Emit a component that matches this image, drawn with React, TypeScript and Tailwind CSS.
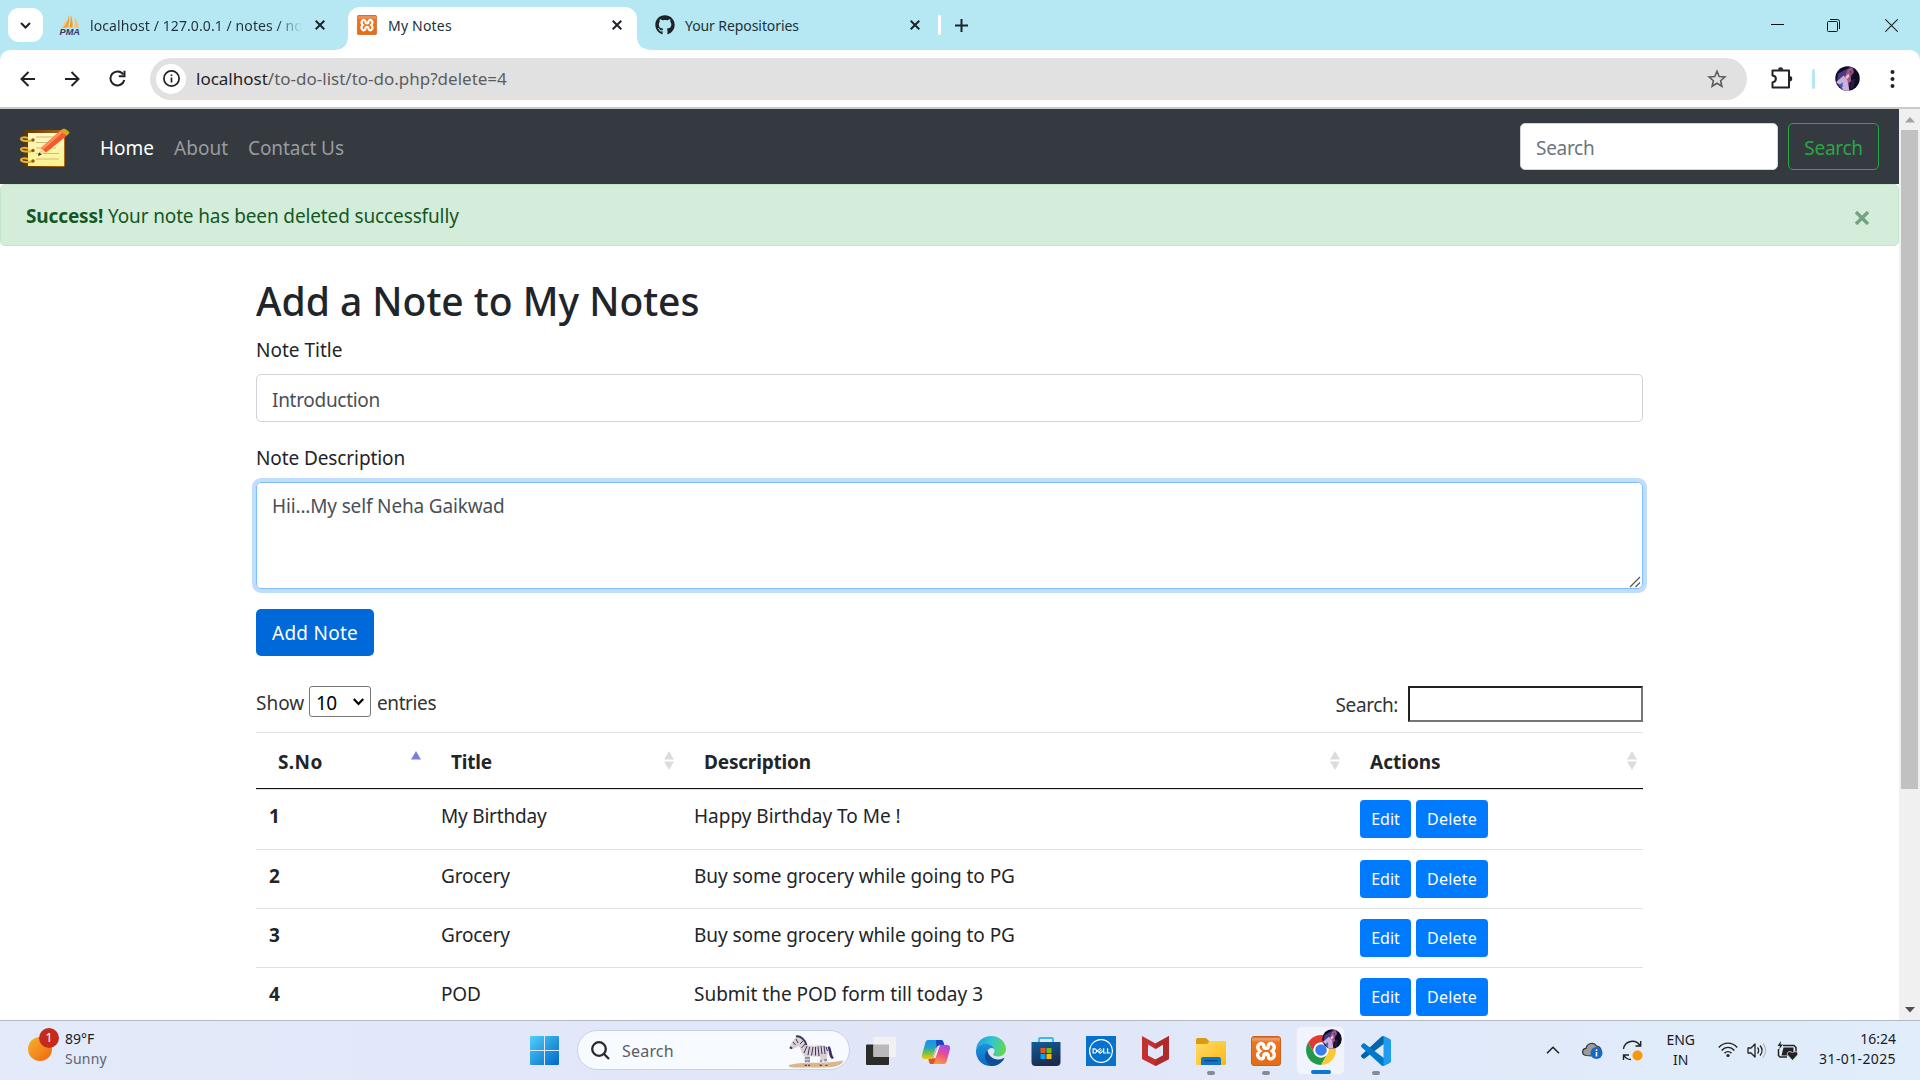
import React from "react";
import { FaGithub } from "react-icons/fa";
import { SiDell } from "react-icons/si";

const notes = [
  { no: 1, title: "My Birthday", text: "Happy Birthday To Me !", height: "h-[60px]", gap: "tracking-[0px]" },
  { no: 2, title: "Grocery", text: "Buy some grocery while going to PG", height: "h-[59px]", gap: "tracking-[-0.06px]" },
  { no: 3, title: "Grocery", text: "Buy some grocery while going to PG", height: "h-[59px]", gap: "tracking-[-0.06px]" },
  { no: 4, title: "POD", text: "Submit the POD form till today 3", height: "h-[59px]", gap: "tracking-[0px]" },
];

const COLS = "grid grid-cols-[172px_252px_667px_296px]";

function CloseX({ size = 10, width = 2, color = "#1f2328" }: { size?: number; width?: number; color?: string }) {
  return (
    <svg width={size} height={size} viewBox="0 0 10 10" className="block shrink-0">
      <path d="M.7.7 9.3 9.3M9.3.7.7 9.3" stroke={color} strokeWidth={(width * 10) / size} fill="none" />
    </svg>
  );
}

function PmaIcon() {
  return (
    <svg width="22" height="22" viewBox="0 0 22 22" className="block shrink-0">
      <path d="M10 1C10.6 5 10.600 9 9 13.500L3.500 14C6.500 10.500 9 6 10 1Z" fill="#f7a23b" />
      <path d="M11.500 1C13.500 5 14 9 13.500 13.500H10.200C11.600 9 11.900 5 11.500 1Z" fill="#f59a23" />
      <path d="M15.500 3C18 6.500 19.500 10 20 14L15 13.500C15.800 10 16 6.500 15.500 3Z" fill="#f9c07a" />
      <path d="M5.500 6C5.500 9 4 12 1.500 14H4C6 11.500 6.500 9 5.500 6Z" fill="#fbc98a" />
      <text x="0.500" y="21" fontSize="8.500" fontWeight="700" fontStyle="italic" fontFamily="Liberation Sans, sans-serif" fill="#3b3566" textLength="20.500" lengthAdjust="spacingAndGlyphs">PMA</text>
    </svg>
  );
}

function XamppIcon({ size }: { size: number }) {
  return (
    <svg width={size} height={size} viewBox="0 0 30 30" className="block shrink-0">
      <defs>
        <linearGradient id="xa" x1="0" y1="0" x2="0" y2="1">
          <stop offset="0" stopColor="#b95a26" />
          <stop offset="0.080" stopColor="#f0a070" />
          <stop offset="0.200" stopColor="#ee7420" />
          <stop offset="1" stopColor="#e56c15" />
        </linearGradient>
      </defs>
      <rect x="0.500" y="0.500" width="29" height="29" rx="2.500" fill="url(#xa)" stroke="#c8601f" />
      <path
        d="M8 8.500C10.500 6.300 13 8 12.800 10.500C12.800 12 13.500 12.400 15 12.400C16.500 12.400 17.200 12 17.200 10.500C17 8 19.500 6.300 22 8.500C24.300 10.800 23 13.500 21.200 15C23.500 17 24.300 19.500 22 21.800C19.500 24 17.200 22.400 17.200 20C17.200 18.200 16.500 17.800 15 17.800C13.500 17.800 12.800 18.200 12.800 20C12.800 22.400 10.500 24 8 21.800C5.700 19.500 6.500 17 8.800 15C7 13.500 5.700 10.800 8 8.500Z"
        fill="none"
        stroke="#fff"
        strokeWidth="3.400"
      />
    </svg>
  );
}

function NotebookIcon() {
  return (
    <svg width="50" height="40" viewBox="0 0 50 40" className="block shrink-0">
      <defs>
        <linearGradient id="nb" x1="0" y1="0" x2="1" y2="0">
          <stop offset="0" stopColor="#5a3608" />
          <stop offset="1" stopColor="#b06a14" />
        </linearGradient>
        <linearGradient id="pg" x1="0" y1="0" x2="0" y2="1">
          <stop offset="0" stopColor="#fff7c8" />
          <stop offset="1" stopColor="#fdf28c" />
        </linearGradient>
      </defs>
      <rect x="4" y="2" width="41" height="37" rx="2" fill="url(#nb)" />
      <path d="M8 5H44V38H8Z" fill="url(#pg)" />
      <path d="M16 9H38M16 14.500H34M16 20H36M16 25.500H39M16 31H39" stroke="#cfb978" strokeWidth="1" />
      <g fill="none" stroke="#e8b32a" strokeWidth="2">
        <path d="M13 12C8 14 2 13 1 11C1 9 5 9 8 10" />
        <path d="M13 22.500C8 24.500 2 23.500 1 21.500C1 19.500 5 19.500 8 20.500" />
        <path d="M13 33C8 35 2 34 1 32C1 30 5 30 8 31" />
      </g>
      <g fill="#8a5a10">
        <circle cx="13" cy="12" r="1.700" />
        <circle cx="13" cy="22.500" r="1.700" />
        <circle cx="13" cy="33" r="1.700" />
      </g>
      <path d="M18 28L21 20L26 24Z" fill="#f3d9a0" />
      <path d="M18 28L19.200 24.500L21.700 26.500Z" fill="#1d1d1d" />
      <path d="M21 20L40.500 2.500L46.500 8L26 24.500Z" fill="#f4592a" />
      <path d="M21 20L40.500 2.500L42.800 4.500L23 21.700Z" fill="#ff8c5c" />
      <path d="M40.500 2.500L43 .8C45.500 .2 49 3 49.500 5L46.500 8Z" fill="#d9a520" />
    </svg>
  );
}

function Avatar({ size }: { size: number }) {
  return (
    <svg width={size} height={size} viewBox="0 0 26 26" className="block shrink-0">
      <defs>
        <clipPath id="avc">
          <circle cx="13" cy="13" r="12.700" />
        </clipPath>
      </defs>
      <g clipPath="url(#avc)">
        <rect width="26" height="26" fill="#0f0b20" />
        <path d="M3 8L14 2L18 0L20 6L16 13L14 26H8L2 18Z" fill="#4a3a86" />
        <path d="M13 4L18 1L19 7L16 9L17 16L13 18L10 12Z" fill="#a0587e" />
        <path d="M1 17L9 10L13 15L15 26H9L6 20Z" fill="#cfaedd" />
        <path d="M11 11L14 8L15 11L12 14Z" fill="#e8c0cc" />
        <path d="M4 20L8 17L8 22Z" fill="#2e66c0" />
        <path d="M15 6L17 5L17 8Z" fill="#6b1f3c" />
        <path d="M17 15L21 13L19 23L16 24Z" fill="#2b1b46" />
      </g>
    </svg>
  );
}

function SortIcon({ asc = false }: { asc?: boolean }) {
  return (
    <svg width="10" height="19" viewBox="0 0 10 19" className="block shrink-0">
      <path d="M5 0L10 8.500H0Z" fill={asc ? "#7b7fdf" : "#dcdcdc"} />
      {!asc && <path d="M5 19L10 10.500H0Z" fill="#dcdcdc" />}
    </svg>
  );
}

function BrowserTabs() {
  return (
    <div className="flex h-[50px] items-center bg-[#b5e8f3] text-[14px] text-[#22303a]">
      <div className="ml-2 flex h-[34px] w-[35px] items-center justify-center rounded-[11px] bg-white">
        <svg width="11" height="7" viewBox="0 0 11 7">
          <path d="M1 1L5.500 5.500L10 1" fill="none" stroke="#1f2328" strokeWidth="2" />
        </svg>
      </div>
      <div className="ml-4 flex w-[266px] items-center">
        <PmaIcon />
        <span className="ml-[9px] w-[212px] whitespace-nowrap bg-linear-to-r from-[#22303a] from-88% to-transparent bg-clip-text tracking-[0.09px] text-transparent">
          localhost / 127.0.0.1 / notes / no
        </span>
        <span className="ml-[13px]">
          <CloseX />
        </span>
      </div>
      <div className="ml-[3px] flex h-[50px] items-end">
        <svg width="20" height="14" viewBox="0 0 20 14" className="block">
          <path d="M0 14H20V0C20 9 15 14 6 14Z" fill="#fff" />
        </svg>
        <div className="flex h-[43px] w-[289px] items-center rounded-t-[12px] bg-white pl-[9px] pr-[15px] pb-[7px]">
          <XamppIcon size={20} />
          <span className="ml-[11px] flex-1 tracking-[0.2px]">My Notes</span>
          <CloseX />
        </div>
        <svg width="16" height="14" viewBox="0 0 16 14" className="block">
          <path d="M16 14H0V0C0 9 5 14 16 14Z" fill="#fff" />
        </svg>
      </div>
      <div className="ml-[2px] flex w-[265px] items-center">
        <FaGithub size={20} color="#1f2328" />
        <span className="ml-[10px] flex-1 tracking-[-0.08px]">Your Repositories</span>
        <CloseX />
      </div>
      <div className="ml-[18px] h-5 w-[3px] rounded bg-white" />
      <svg width="13" height="13" viewBox="0 0 13 13" className="ml-[14px]">
        <path d="M6.500 0V13M0 6.500H13" stroke="#1f2328" strokeWidth="2" />
      </svg>
      <div className="ml-auto flex items-center pr-[22px]">
        <svg width="13" height="13" viewBox="0 0 13 13" className="mr-[43px]">
          <path d="M0 5.500H13" stroke="#111" />
        </svg>
        <svg width="13" height="13" viewBox="0 0 13 13" className="mr-[45px]" fill="none" stroke="#111">
          <rect x="0.500" y="2.500" width="10" height="10" rx="1" />
          <path d="M3 .5H10.500A2 2 0 0 1 12.500 2.500V10" />
        </svg>
        <svg width="13" height="13" viewBox="0 0 13 13" stroke="#222" fill="none">
          <path d="M.3.3 12.700 12.700M12.700.3.3 12.700" strokeWidth="1.100" />
        </svg>
      </div>
    </div>
  );
}

function Toolbar() {
  return (
    <div className="bg-[#b5e8f3]">
      <div className="flex h-[59px] items-center rounded-t-[10px] border-b-2 border-[#c9cbcb] bg-white pl-5">
        <svg width="15" height="16" viewBox="0 0 15 16" fill="none" stroke="#1f2328" strokeWidth="2">
          <path d="M15 8H1.500M8.500 1L1.500 8L8.500 15" />
        </svg>
        <svg width="15" height="16" viewBox="0 0 15 16" fill="none" stroke="#1f2328" strokeWidth="2" className="ml-[30px]">
          <path d="M0 8H13.500M6.500 1L13.500 8L6.500 15" />
        </svg>
        <svg width="17" height="17" viewBox="0 0 17 17" fill="none" stroke="#1f2328" strokeWidth="2" className="ml-[29px]">
          <path d="M14.300 4.500A7 7 0 1 0 15.300 10" />
          <path d="M15.500 .8V6.300H9.800" />
        </svg>
        <div className="ml-[24px] flex h-[42px] w-[1597px] items-center rounded-full bg-[#e1e1e1] pl-1.5 pr-5 text-[17px]">
          <div className="flex size-[30px] items-center justify-center rounded-full bg-white">
            <svg width="17" height="17" viewBox="0 0 17 17" fill="none" stroke="#1f2328">
              <circle cx="8.500" cy="8.500" r="7.600" strokeWidth="1.700" />
              <path d="M8.500 7.500V12.500M8.500 4.500V6" strokeWidth="1.700" />
            </svg>
          </div>
          <span className="ml-[10px] flex-1 pt-px text-[#5b5e60]">
            <span className="text-[#1f2328]">localhost</span>/to-do-list/to-do.php?delete=4
          </span>
          <svg width="20" height="20" viewBox="0 0 20 20" fill="none" stroke="#5a5d5f" strokeWidth="1.600">
            <path d="M10 2.300L12.200 7.500L17.900 8L13.600 11.700L14.900 17.300L10 14.300L5.100 17.300L6.400 11.700L2.100 8L7.800 7.500Z" />
          </svg>
        </div>
        <svg width="22" height="22" viewBox="0 0 22 22" className="mb-0.5 ml-6" fill="none" stroke="#1f2328" strokeWidth="2">
          <path d="M1.500 3.500H18V20.500H1.500V15.500C6 14.500 6 9 1.500 8.500Z" strokeLinejoin="round" />
          <path d="M7 2.800A2.600 2.600 0 0 1 12.200 2.800ZM18.500 9A2.600 2.600 0 0 1 18.500 14.500Z" fill="#1f2328" stroke="none" />
        </svg>
        <div className="ml-[19px] h-5 w-[3px] rounded bg-[#b5e8f3]" />
        <div className="ml-5">
          <Avatar size={25} />
        </div>
        <svg width="5" height="18" viewBox="0 0 5 18" className="ml-[30px]" fill="#1f2328">
          <circle cx="2.500" cy="2" r="2" />
          <circle cx="2.500" cy="9" r="2" />
          <circle cx="2.500" cy="16" r="2" />
        </svg>
      </div>
    </div>
  );
}

function Navbar() {
  return (
    <nav className="flex h-[75px] items-center bg-[#343a40] pl-5 pr-5">
      <div className="pt-0.5">
        <NotebookIcon />
      </div>
      <span className="ml-[30px] pt-1 text-white">Home</span>
      <span className="ml-5 pt-1 text-[#999c9f]">About</span>
      <span className="ml-5 pt-1 tracking-[-0.07px] text-[#999c9f]">Contact Us</span>
      <div className="ml-auto flex h-[47px] w-[258px] items-center rounded-[5px] border border-[#ced4da] bg-white px-[15px] pt-1 tracking-[-0.3px] text-[#6c757d]">
        Search
      </div>
      <div className="ml-[10px] flex h-[47px] w-[91px] items-center justify-center rounded-[5px] border border-[#28a745] pt-1 tracking-[-0.3px] text-[#28a745]">
        Search
      </div>
    </nav>
  );
}

function NoteForm() {
  return (
    <section>
      <h2 className="pt-[30px] text-[39px] font-medium leading-[50px] tracking-[-0.02px]">Add a Note to My Notes</h2>
      <div className="pt-[9px] leading-[30px]">Note Title</div>
      <div className="mt-[9px] flex h-12 items-center rounded-[5px] border border-[#ced4da] px-[15px] pt-1 tracking-[-0.3px] text-[#495057]">
        Introduction
      </div>
      <div className="mt-[21px] leading-[30px] tracking-[-0.1px]">Note Description</div>
      <div className="mt-[9px] flex h-[107px] justify-between rounded-[5px] border border-[#80bdff] pl-[15px] pt-2 leading-[30px] tracking-[-0.15px] text-[#495057] shadow-[0_0_0_4px_#bfdeff]">
        Hii...My self Neha Gaikwad
        <svg width="12" height="12" viewBox="0 0 12 12" className="mr-px self-end" stroke="#555" strokeWidth="1.200">
          <path d="M1 11L11 1M6.500 11L11 6.500" />
        </svg>
      </div>
      <button className="mt-5 flex h-[47px] w-[118px] items-center justify-center rounded-[5px] bg-[#0069d9] pt-px tracking-[0.25px] text-white">
        Add Note
      </button>
    </section>
  );
}

function NotesTable() {
  return (
    <section>
      <div className="flex h-[76px] items-start justify-between pt-[30px] text-[#333]">
        <div className="flex h-[31px] items-center">
          <span className="w-[53px] pt-[3px]">Show</span>
          <div className="flex h-[31px] w-[62px] items-center justify-between rounded-[3px] border border-[#767676] pl-[6px] pr-[6px] text-black">
            <span className="pt-[3px] tracking-[-0.6px]">10</span>
            <svg width="11" height="8" viewBox="0 0 11 8" fill="none" stroke="#000" strokeWidth="2.200">
              <path d="M.8 1L5.500 6L10.200 1" />
            </svg>
          </div>
          <span className="ml-[6px] pt-[3px] tracking-[-0.4px]">entries</span>
        </div>
        <div className="flex items-center">
          <span className="pt-[3px] tracking-[-0.4px]">Search:</span>
          <div className="ml-[10px] h-9 w-[235px] border-2 border-b-[#767676] border-l-[#212121] border-r-[#767676] border-t-[#212121]" />
        </div>
      </div>
      <div className={`${COLS} h-[57px] border-b border-t border-b-[#111] border-t-[#dee2e6] font-bold`}>
        <div className="flex items-center justify-between pl-[22px] pr-[7px]">
          <span className="pt-[3px] tracking-[0.4px]">S.No</span>
          <SortIcon asc />
        </div>
        <div className="flex items-center justify-between pl-[23px] pr-[6px]">
          <span className="pt-[3px] tracking-[-0.18px]">Title</span>
          <SortIcon />
        </div>
        <div className="flex items-center justify-between pl-[24px] pr-[7px]">
          <span className="pt-[3px] tracking-[-0.18px]">Description</span>
          <SortIcon />
        </div>
        <div className="flex items-center justify-between pl-[23px] pr-[6px]">
          <span className="pt-[3px]">Actions</span>
          <SortIcon />
        </div>
      </div>
      {notes.map((n) => (
        <div key={n.no} className={`${COLS} ${n.height} border-t border-[#dee2e6] pt-[10px] leading-[30px]`}>
          <div className="pl-[13px] pt-px font-bold">{n.no}</div>
          <div className="pl-[13px] pt-px tracking-[-0.2px]">{n.title}</div>
          <div className={`pl-[14px] pt-px ${n.gap}`}>{n.text}</div>
          <div className="flex pl-[13px] text-[16px] text-white">
            <button className="flex h-[38px] w-[51px] items-center justify-center rounded-[4px] bg-[#007bff]">Edit</button>
            <button className="ml-[5px] flex h-[38px] w-[72px] items-center justify-center rounded-[4px] bg-[#007bff] tracking-[0.22px]">Delete</button>
          </div>
        </div>
      ))}
    </section>
  );
}

function Scrollbar() {
  return (
    <div className="flex w-[21px] flex-col items-center bg-[#f0f0f0]">
      <div className="flex h-[21px] items-center">
        <svg width="10" height="6" viewBox="0 0 10 6">
          <path d="M5 0L10 5.500H0Z" fill="#a3a3a3" />
        </svg>
      </div>
      <div className="h-[659px] w-[17px] bg-[#c1c1c1]" />
      <div className="mt-auto flex h-[21px] items-center">
        <svg width="10" height="6" viewBox="0 0 10 6">
          <path d="M5 5.500L10 0H0Z" fill="#505050" />
        </svg>
      </div>
    </div>
  );
}

function Zebra() {
  return (
    <svg width="56" height="36" viewBox="0 0 56 36" className="block">
      <path d="M1 32C12 28.500 40 31 55 27.500C55 31 50 34.500 35 34.500H6C2 34.500 0 33.500 1 32Z" fill="#dcb68a" />
      <path d="M41 13C44 15 43 22 46 25L44 26C40 23 42 18 39 15Z" fill="#3c2f66" />
      <path d="M2 14L4 9L8 4L12 4L18 12C24 14 32 11 38 13C41 14 41 19 39.500 21L39 24L39.500 33H37.500L35.500 25L33.500 33H31.500L32.500 24C28 23 24 24 22 23V33H20L19.500 25L18.500 33H16.500V23C13 20 13 16 11 13L6 15.500C4 16.500 2 16 2 14Z" fill="#d8d0d4" />
      <g stroke="#40355f" strokeWidth="1" fill="none">
        <path d="M8 3.500C12 2 17 7 18.500 12" strokeWidth="2" />
        <path d="M5 9L7.500 12M8 6L10 10M12 11L15 8M13.500 15L17 11M16 20L19 13M20 22L21.500 14M23.500 22.500L25 14M27.500 22.500L27.500 14M31 23L30 13.500M34 21L33 13M37 21L36 13M39.500 18L38 14" />
        <path d="M17 25H22M17 28H22M35.500 27H39M32 28H34" strokeWidth="0.800" />
      </g>
      <path d="M2 13L1.500 15.500L4 16.300L4.500 14.500Z" fill="#4a3f62" />
      <path d="M16.500 31.500H19V33H16.500ZM20 31.500H22V33H20ZM31.500 31.500H34V33H31.500ZM37.500 31.500H39.500V33H37.500Z" fill="#5a506d" />
    </svg>
  );
}

function WindowsIcon() {
  return (
    <svg width="29" height="29" viewBox="0 0 29 29" className="block">
      <defs>
        <linearGradient id="wn" x1="0" y1="0" x2="1" y2="1">
          <stop offset="0" stopColor="#4fd0fb" />
          <stop offset="1" stopColor="#0067c8" />
        </linearGradient>
      </defs>
      <path d="M0 1Q0 0 1 0H14V14H0ZM15 0H28Q29 0 29 1V14H15ZM0 15H14V29H1Q0 29 0 28ZM15 15H29V28Q29 29 28 29H15Z" fill="url(#wn)" />
    </svg>
  );
}

function TaskViewIcon() {
  return (
    <svg width="30" height="30" viewBox="0 0 30 30">
      <rect x="0" y="8.500" width="23" height="20.500" rx="1" fill="#2b2b2a" />
      <rect x="7.500" y="1" width="22.500" height="20" rx="1" fill="#f1f1f1" />
      <rect x="7.500" y="8.500" width="15.500" height="12.500" fill="#b9b9b9" />
    </svg>
  );
}

function CopilotIcon() {
  return (
    <svg width="30" height="28" viewBox="0 0 30 28">
      <defs>
        <linearGradient id="cp1" x1="0" y1="0" x2="0" y2="1">
          <stop offset="0" stopColor="#1b8ff0" />
          <stop offset="0.400" stopColor="#21a4c8" />
          <stop offset="0.650" stopColor="#6cc04a" />
          <stop offset="1" stopColor="#f6c80c" />
        </linearGradient>
        <linearGradient id="cp2" x1="0.700" y1="0" x2="0.300" y2="1">
          <stop offset="0" stopColor="#a54af0" />
          <stop offset="0.450" stopColor="#ee4f8c" />
          <stop offset="1" stopColor="#fba43a" />
        </linearGradient>
      </defs>
      <path d="M7 2H20C22 2 22.500 4 23 7L18 8C15.500 8 15 9 14.200 12L12 18C11 20.500 10 21 8 21H4C1 21 .5 18.500 1.200 16L4 6C4.800 3 5.500 2 7 2Z" fill="url(#cp1)" />
      <path d="M15 2H20C22 2 22.500 4 23.500 7.500H19C17 7.500 16.500 8 15.500 10Z" fill="#1845c4" />
      <path d="M23 26H10C8.500 26 8 24 7.500 21C10.500 21 11.500 20.500 12.500 18L16 9.500C17 7.500 18 7 20 7H26C29 7 29.500 9.500 28.800 12L26 22C25.200 25 24.500 26 23 26Z" fill="url(#cp2)" />
      <path d="M7.500 21H10C12 21 12.500 19.500 13.500 17L14.500 21L12.500 26H10C8.500 26 8 24 7.500 21Z" fill="#e8502c" />
      <path d="M17 8L19 7.300L14.500 20L12 20.500Z" fill="#e8effa" />
    </svg>
  );
}

function EdgeIcon() {
  return (
    <svg width="30" height="30" viewBox="0 0 30 30">
      <defs>
        <linearGradient id="ed1" x1="0" y1="0.300" x2="1" y2="0.500">
          <stop offset="0" stopColor="#1e9fe0" />
          <stop offset="0.500" stopColor="#31c4d2" />
          <stop offset="1" stopColor="#64d94b" />
        </linearGradient>
        <linearGradient id="ed2" x1="0" y1="0" x2="0" y2="1">
          <stop offset="0" stopColor="#1a93de" />
          <stop offset="1" stopColor="#0a68c0" />
        </linearGradient>
      </defs>
      <path d="M0 13.500C1 5 7.500 0 15 0C24 0 30 6.500 30 13C30 18 26 20.500 22 20.500C19 20.500 17 19.500 17 18.500C17.500 17.500 18.500 16.500 18.500 15C18.500 11 14 8 9 8C5 8 1.500 10 0 13.500Z" fill="url(#ed1)" />
      <path d="M0 14C1.500 10 5 7.800 9 7.800C13 7.800 17 9.500 18.300 13C16 11 12.300 12 11.300 15.500C10 20 14 26 21 26C23 26 25 25 27.500 23.500C25 27.500 20.500 30 15 30C6 30 -0.500 23 0 14Z" fill="url(#ed2)" />
      <path d="M11.400 14.500C7 18 8.500 27 15.500 30C21 30 25 27.500 28.200 22.800C28.500 22.200 28 21.800 27.300 22.200C20 26 12.500 21 11.400 14.500Z" fill="#104f95" />
    </svg>
  );
}

function StoreIcon() {
  return (
    <svg width="30" height="30" viewBox="0 0 30 30">
      <defs>
        <linearGradient id="st" x1="0" y1="0" x2="0.300" y2="1">
          <stop offset="0" stopColor="#0f5e9c" />
          <stop offset="1" stopColor="#1b2d4e" />
        </linearGradient>
      </defs>
      <path d="M8 7V3Q8 2 9 2H21Q22 2 22 3V7" fill="none" stroke="#35bdf0" strokeWidth="1.800" />
      <path d="M.5 6H29.500V26Q29.500 30 25.500 30H4.500Q.5 30 .5 26Z" fill="url(#st)" />
      <path d="M9.500 12H14.500V17H9.500Z" fill="#f25022" />
      <path d="M15.500 12H20.500V17H15.500Z" fill="#7fba00" />
      <path d="M9.500 18H14.500V23H9.500Z" fill="#00a4ef" />
      <path d="M15.500 18H20.500V23H15.500Z" fill="#ffb900" />
    </svg>
  );
}

function McAfeeIcon() {
  return (
    <svg width="27" height="30" viewBox="0 0 27 30">
      <path d="M0 0L13.500 7.500L27 0V23L13.500 30L0 23ZM6 8.500V19.500L13.500 23.500L21 19.500V8.500L13.500 13Z" fill="#c2302f" fillRule="evenodd" />
      <path d="M13.500 7.500L27 0V23L13.500 30V23.500L21 19.500V8.500L13.500 13Z" fill="#b02a2c" />
    </svg>
  );
}

function FolderIcon() {
  return (
    <svg width="30" height="30" viewBox="0 0 30 30">
      <defs>
        <linearGradient id="fo" x1="0" y1="0" x2="1" y2="1">
          <stop offset="0" stopColor="#ffdc6a" />
          <stop offset="1" stopColor="#fbb910" />
        </linearGradient>
      </defs>
      <path d="M0 3.500Q0 2 1.500 2H10L13.500 5.500V9H0Z" fill="#dc9a10" />
      <path d="M0 8H11L14 5H28.500Q30 5 30 6.500V27.500Q30 29 28.500 29H1.500Q0 29 0 27.500Z" fill="url(#fo)" />
      <path d="M5 29V23Q5 21 7 21H23Q25 21 25 23V29Z" fill="#1273c9" />
      <path d="M8.500 24.700H21.500" stroke="#0a4a8c" strokeWidth="1.400" />
    </svg>
  );
}

function ChromeIcon() {
  return (
    <svg width="30" height="30" viewBox="2 2 44 44">
      <path d="M24 13H43.050A22 22 0 0 0 4.950 13L14.470 29.500A11 11 0 0 1 24 13Z" fill="#e33b2e" />
      <path d="M33.530 29.500L24 46A22 22 0 0 1 4.950 13L14.470 29.500A11 11 0 0 0 33.530 29.500Z" fill="#229a4a" />
      <path d="M24 13A11 11 0 0 1 33.530 29.500L24 46A22 22 0 0 0 43.050 13Z" fill="#fcc934" />
      <circle cx="24" cy="24" r="11" fill="#fff" />
      <circle cx="24" cy="24" r="8.500" fill="#3b7ded" />
    </svg>
  );
}

function VsCodeIcon() {
  return (
    <svg width="30" height="30" viewBox="0 0 100 100">
      <path d="M96.460 10.800L75.860.87C73.470-.28 70.620.21 68.750 2.080L1.300 63.580C-.52 65.230-.51 68.090 1.300 69.740L6.810 74.750C8.300 76.100 10.530 76.200 12.130 74.990L93.360 13.370C96.090 11.300 100 13.240 100 16.670V16.430C100 14.020 98.620 11.830 96.460 10.800Z" fill="#0065a9" />
      <path d="M96.460 89.200L75.860 99.130C73.470 100.280 70.620 99.790 68.750 97.920L1.300 36.420C-.52 34.770-.51 31.910 1.300 30.260L6.810 25.250C8.300 23.900 10.530 23.800 12.130 25.010L93.360 86.630C96.090 88.700 100 86.760 100 83.330V83.570C100 85.980 98.620 88.170 96.460 89.200Z" fill="#007acc" />
      <path d="M75.860 99.130C73.470 100.270 70.620 99.790 68.750 97.920C71.060 100.220 75 98.590 75 95.330V4.670C75 1.410 71.060-.22 68.750 2.080C70.620.21 73.470-.28 75.860.87L96.460 10.780C98.620 11.820 100 14.010 100 16.410V83.590C100 85.990 98.620 88.180 96.460 89.220Z" fill="#1f9cf0" />
    </svg>
  );
}

function DellIcon() {
  return (
    <div className="flex size-[30px] items-center justify-center bg-[#0672cb]">
      <SiDell size={24} color="#fff" />
    </div>
  );
}

function TaskbarApp({ children, dot = false }: { children: React.ReactNode; dot?: boolean }) {
  return (
    <div className="flex w-[55px] flex-col items-center">
      <div className="flex h-[49px] items-end pb-[4px]">{children}</div>
      <div className={dot ? "mt-[1px] h-1 w-2 rounded-full bg-[#868a93]" : "mt-[1px] h-1 w-2"} />
    </div>
  );
}

function Taskbar() {
  return (
    <footer className="flex h-[60px] border-t border-[#b3bac6] bg-linear-to-r from-[#e3eafa] via-[#e0e6f8] to-[#e1edfb] text-[14px] text-[#1b1b1f]">
      <div className="flex w-[530px] pl-7 pt-[7px]">
        <div className="relative mt-[9px] size-6 rounded-full bg-linear-to-br from-[#f3b52c] to-[#f0600a]">
          <div className="absolute -top-[9px] left-[11px] flex size-5 items-center justify-center rounded-full bg-[#c42b1c] text-[13px] text-white">1</div>
        </div>
        <div className="ml-[13px] pt-px leading-5">
          <div>89°F</div>
          <div className="tracking-[0.24px] text-[#5f6470]">Sunny</div>
        </div>
      </div>
      <div className="pt-[15px]">
        <WindowsIcon />
      </div>
      <div className="ml-[18px] mt-[9px] flex h-[40px] w-[273px] items-center rounded-full border border-[#c6d2e8] bg-[#f7fafe] pl-[13px] text-[16px]">
        <svg width="19" height="19" viewBox="0 0 19 19" fill="none" stroke="#2a2a2a" strokeWidth="2.300">
          <circle cx="8" cy="8" r="6.800" />
          <path d="M12.800 12.800L18 18" />
        </svg>
        <span className="ml-3 flex-1 pt-px tracking-[0.2px] text-[#5a5d63]">Search</span>
        <div className="mr-[5px] pt-px">
          <Zebra />
        </div>
      </div>
      <div className="ml-[3px] flex">
        <TaskbarApp><TaskViewIcon /></TaskbarApp>
        <TaskbarApp><CopilotIcon /></TaskbarApp>
        <TaskbarApp><EdgeIcon /></TaskbarApp>
        <TaskbarApp><StoreIcon /></TaskbarApp>
        <TaskbarApp><DellIcon /></TaskbarApp>
        <TaskbarApp><McAfeeIcon /></TaskbarApp>
        <TaskbarApp dot><FolderIcon /></TaskbarApp>
        <TaskbarApp dot><XamppIcon size={30} /></TaskbarApp>
        <div className="relative mx-[3px] mt-[5px] flex h-[49px] w-[49px] flex-col items-center rounded-[6px] border border-[#e6eaf6] bg-[#f1f4fc] pt-[8px]">
          <ChromeIcon />
          <div className="absolute right-[2px] top-[2px]">
            <Avatar size={20} />
          </div>
          <div className="mt-[5px] h-1 w-5 rounded-full bg-[#0a78d4]" />
        </div>
        <TaskbarApp dot><VsCodeIcon /></TaskbarApp>
      </div>
      <div className="ml-auto flex items-center pb-px pr-6">
        <svg width="14" height="8" viewBox="0 0 14 8" fill="none" stroke="#222" strokeWidth="1.600">
          <path d="M1 7.300L7 1.300L13 7.300" />
        </svg>
        <svg width="21" height="17" viewBox="0 0 21 17" className="ml-[22px]">
          <path d="M4 13.500C-1 12.500 0 6.500 4 6.300C5 1 12 -.5 14.500 4C17.500 4 19.500 7 19 10L10 14Z" fill="#9c9c9c" stroke="#333" strokeWidth="1.200" />
          <circle cx="14.500" cy="11" r="6" fill="#1369c4" />
          <path d="M14.500 10V14.500M14.500 7.300V8.900" stroke="#fff" strokeWidth="1.500" />
        </svg>
        <svg width="21" height="21" viewBox="0 0 21 21" className="ml-[19px]" fill="none" stroke="#222" strokeWidth="1.400">
          <path d="M1.500 9A9 9 0 0 1 18 5.500M18.700 1V6H13.500M1.500 20V15H7M2 15.500A8 8 0 0 0 9 19.500" />
          <circle cx="15.500" cy="15.500" r="5" fill="#fb9607" stroke="none" />
        </svg>
        <div className="ml-[23px] pb-px text-center leading-5">
          <div>ENG</div>
          <div>IN</div>
        </div>
        <svg width="20" height="16" viewBox="0 0 20 16" className="ml-[23px]" fill="none" stroke="#222" strokeWidth="1.400">
          <path d="M.8 5.500C6-.3 14-.3 19.200 5.500M3.600 8.500C7.300 4.300 12.700 4.300 16.400 8.500M6.500 11.300C8.500 9 11.500 9 13.500 11.300" />
          <circle cx="10" cy="13.500" r="1.600" fill="#222" stroke="none" />
        </svg>
        <svg width="20" height="17" viewBox="0 0 20 17" className="ml-[9px]" fill="none" stroke="#222" strokeWidth="1.300">
          <path d="M1 6H4L8 2V15L4 11H1Z" strokeLinejoin="round" />
          <path d="M10.500 5.500C12 7 12 10 10.500 11.500M13 3.500C15.500 6.500 15.500 10.500 13 13.500" />
          <path d="M16 1.500C19.500 6 19.500 11 16 15.500" stroke="#b5bcc8" />
        </svg>
        <svg width="21" height="19" viewBox="0 0 21 19" className="ml-[10px]">
          <path d="M6 4.500H17L19 6.500V11" fill="none" stroke="#222" strokeWidth="1.500" />
          <path d="M6.500 6.500H16.500V12L11 14.500H4.500Z" fill="#222" />
          <path d="M1.500 8V14.500L3 16H10" fill="none" stroke="#222" strokeWidth="1.500" />
          <path d="M4 0L.5 5H3L2 8.500L6 3.500H3.500Z" fill="#222" />
          <path d="M15.500 19.500L10.500 14C9 10.500 14 9.500 15.500 12C17 9.500 22 10.500 20.500 14Z" fill="#222" stroke="#e1ecfb" strokeWidth="0.800" />
        </svg>
        <div className="ml-[19px] w-[79px] pb-[2px] text-right leading-5">
          <div>16:24</div>
          <div className="tracking-[0.38px]">31-01-2025</div>
        </div>
      </div>
    </footer>
  );
}

export default function App() {
  return (
    <div className="flex h-[1080px] w-[1920px] flex-col overflow-hidden bg-white font-['Noto_Sans',sans-serif] text-[#212529]">
      <BrowserTabs />
      <Toolbar />
      <div className="flex h-[911px]">
        <main className="h-[911px] w-[1899px] overflow-hidden text-[19px]">
          <Navbar />
          <div className="flex h-[62px] items-center justify-between rounded-[5px] border border-[#c3e6cb] bg-[#d4edda] pl-[25px] pr-[29px] tracking-[-0.13px] text-[#155724]">
            <span className="pt-0.5">
              <strong className="font-bold">Success!</strong> Your note has been deleted successfully
            </span>
            <span className="pt-1.5">
              <CloseX size={14} width={3.4} color="#73a380" />
            </span>
          </div>
          <div className="ml-[256px] w-[1387px]">
            <NoteForm />
            <NotesTable />
          </div>
        </main>
        <Scrollbar />
      </div>
      <Taskbar />
    </div>
  );
}
